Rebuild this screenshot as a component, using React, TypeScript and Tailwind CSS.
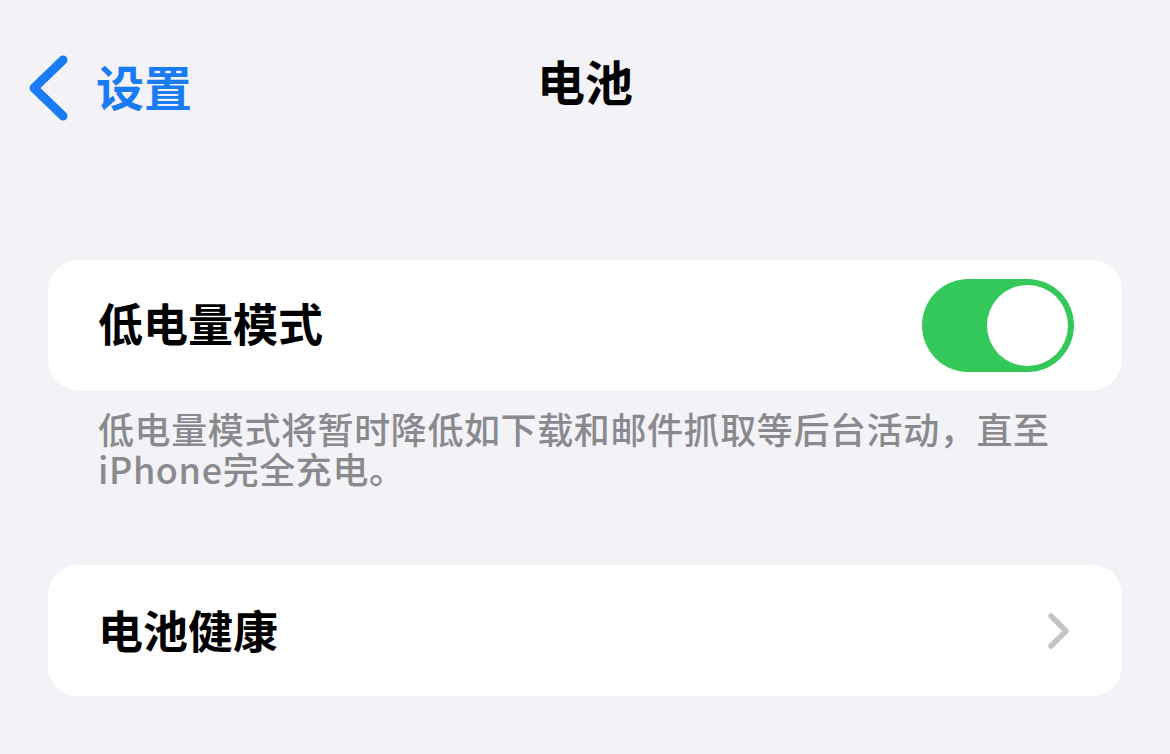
const font = { fontFamily: '"Noto Sans CJK SC", "Noto Sans", sans-serif' };

function Toggle({ on }: { on: boolean }) {
  return (
    <span className={`flex h-[93px] w-[152px] items-center rounded-full p-[6px] ${on ? "justify-end bg-[#34c759]" : "justify-start bg-[#e9e9eb]"}`}>
      <span className="h-[81px] w-[81px] rounded-full bg-white" />
    </span>
  );
}

export default function App() {
  return (
    <div style={font} className="h-[754px] w-[1170px] overflow-hidden bg-[#f2f2f7] text-black">
      <header className="relative flex h-[176px] items-start pt-[54px]">
        <button className="flex items-center gap-[26px] pl-[26px] text-[#1a7cf5]">
          <svg width="44" height="68" viewBox="0 0 44 68" fill="none">
            <path d="M37 6 L8 34 L37 62" stroke="currentColor" strokeWidth="9" strokeLinecap="round" strokeLinejoin="round" />
          </svg>
          <span className="-mt-[6px] text-[48px] font-bold leading-[64px]">设置</span>
        </button>
        <h1 className="absolute left-1/2 top-[48px] -translate-x-1/2 text-[48px] font-bold leading-[64px]">电池</h1>
      </header>

      <section className="mx-[48px] mt-[84px]">
        <div className="flex h-[130px] items-center justify-between rounded-[30px] bg-white pl-[50px] pr-[48px]">
          <span className="-mt-[4px] text-[45px] font-bold">低电量模式</span>
          <Toggle on />
        </div>
        <p className="mt-[18px] px-[50px] text-[36px] font-medium leading-[40px] tracking-[0.6px] text-[#8a8a8e]">
          低电量模式将暂时降低如下载和邮件抓取等后台活动，直至iPhone完全充电。
        </p>
      </section>

      <section className="mx-[48px] mt-[77px]">
        <div className="flex h-[131px] items-center justify-between rounded-[30px] bg-white pl-[50px] pr-[50px]">
          <span className="-mt-[2px] text-[45px] font-bold">电池健康</span>
          <svg width="26" height="40" viewBox="0 0 26 40" fill="none">
            <path d="M5 5 L20 20 L5 35" stroke="#c4c4c7" strokeWidth="5.5" strokeLinecap="round" strokeLinejoin="round" />
          </svg>
        </div>
      </section>
    </div>
  );
}
